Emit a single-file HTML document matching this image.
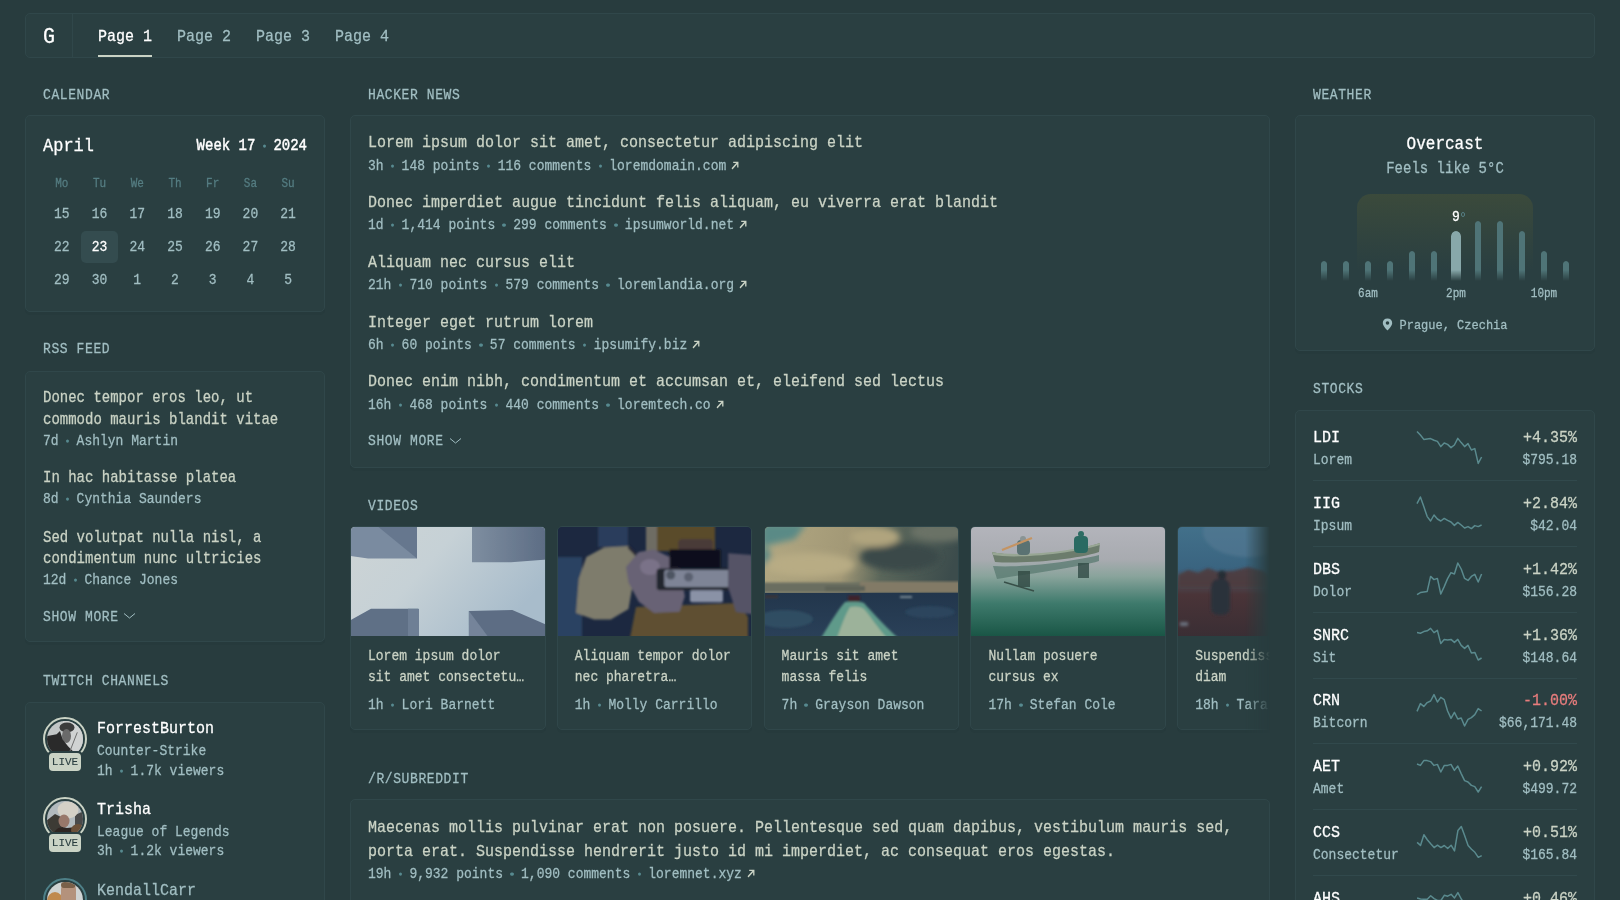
<!DOCTYPE html><html><head><meta charset="utf-8"><style>
:root{
  --bg:#283c3e; --wbg:#2a3f41; --bd:#30474a; --sep:#31494c;
  --base:#a1bec2; --hl:#ffffff; --sub:#557d82; --pri:#cad3c5; --neg:#e87d7d;
}
*{margin:0;padding:0;box-sizing:border-box}
html,body{width:1620px;height:900px;overflow:hidden;background:var(--bg);font-family:"Liberation Mono",monospace;color:var(--base);font-size:13px}
.a{position:absolute}
.t{position:absolute;white-space:pre;line-height:1;transform:scaleY(1.12);transform-origin:0 76.61%;-webkit-text-stroke:0.25px currentColor}
.box{position:absolute;background:var(--wbg);border:1px solid var(--bd);border-radius:5px;box-shadow:0 3px 0 0 #263a3c}
.dot{display:inline-block;width:18px;height:1px;position:relative}
.dot::after{content:"";position:absolute;left:7.25px;top:-4.5px;width:3.5px;height:3.5px;border-radius:50%;background:#578a8f}
.ls{letter-spacing:.6px}
</style></head><body><div id="root" style="position:absolute;left:0;top:0;width:1620px;height:900px;will-change:transform">
<div class="box" style="left:25px;top:13px;width:1570px;height:45px;box-shadow:none"></div>
<div class="a" style="left:72px;top:14px;width:1px;height:43px;background:var(--bd)"></div>
<div class="t" style="left:43px;top:27.88px;font-size:20px;color:var(--hl);">G</div>
<div class="t" style="left:98px;top:29.51px;font-size:15px;color:var(--hl);">Page 1</div>
<div class="t" style="left:177px;top:29.51px;font-size:15px;color:var(--base);">Page 2</div>
<div class="t" style="left:256px;top:29.51px;font-size:15px;color:var(--base);">Page 3</div>
<div class="t" style="left:335px;top:29.51px;font-size:15px;color:var(--base);">Page 4</div>
<div class="a" style="left:98px;top:55px;width:54px;height:2px;background:var(--pri)"></div>
<div class="t" style="left:43px;top:88.94px;font-size:13px;color:var(--base);letter-spacing:0.6px">CALENDAR</div>
<div class="box" style="left:25px;top:115px;width:300px;height:197px"></div>
<div class="t" style="left:43px;top:137.98px;font-size:17px;color:var(--hl);">April</div>
<div class="t" style="right:1313px;top:139.07px;font-size:14px;color:var(--hl);-webkit-text-stroke:0.4px #fff">Week 17<span class="dot"></span>2024</div>
<div class="t" style="left:43.86px;width:36px;text-align:center;top:178.77px;font-size:11px;color:var(--sub);">Mo</div>
<div class="t" style="left:81.57px;width:36px;text-align:center;top:178.77px;font-size:11px;color:var(--sub);">Tu</div>
<div class="t" style="left:119.28px;width:36px;text-align:center;top:178.77px;font-size:11px;color:var(--sub);">We</div>
<div class="t" style="left:156.99px;width:36px;text-align:center;top:178.77px;font-size:11px;color:var(--sub);">Th</div>
<div class="t" style="left:194.7px;width:36px;text-align:center;top:178.77px;font-size:11px;color:var(--sub);">Fr</div>
<div class="t" style="left:232.41000000000003px;width:36px;text-align:center;top:178.77px;font-size:11px;color:var(--sub);">Sa</div>
<div class="t" style="left:270.12px;width:36px;text-align:center;top:178.77px;font-size:11px;color:var(--sub);">Su</div>
<div class="a" style="left:81.4px;top:231.4px;width:36.3px;height:31.6px;border-radius:5px;background:#344c4f"></div>
<div class="t" style="left:43.86px;width:36px;text-align:center;top:208.14px;font-size:13px;color:var(--base);">15</div>
<div class="t" style="left:81.57px;width:36px;text-align:center;top:208.14px;font-size:13px;color:var(--base);">16</div>
<div class="t" style="left:119.28px;width:36px;text-align:center;top:208.14px;font-size:13px;color:var(--base);">17</div>
<div class="t" style="left:156.99px;width:36px;text-align:center;top:208.14px;font-size:13px;color:var(--base);">18</div>
<div class="t" style="left:194.7px;width:36px;text-align:center;top:208.14px;font-size:13px;color:var(--base);">19</div>
<div class="t" style="left:232.41000000000003px;width:36px;text-align:center;top:208.14px;font-size:13px;color:var(--base);">20</div>
<div class="t" style="left:270.12px;width:36px;text-align:center;top:208.14px;font-size:13px;color:var(--base);">21</div>
<div class="t" style="left:43.86px;width:36px;text-align:center;top:240.74px;font-size:13px;color:var(--base);">22</div>
<div class="t" style="left:81.57px;width:36px;text-align:center;top:240.74px;font-size:13px;color:var(--hl);">23</div>
<div class="t" style="left:119.28px;width:36px;text-align:center;top:240.74px;font-size:13px;color:var(--base);">24</div>
<div class="t" style="left:156.99px;width:36px;text-align:center;top:240.74px;font-size:13px;color:var(--base);">25</div>
<div class="t" style="left:194.7px;width:36px;text-align:center;top:240.74px;font-size:13px;color:var(--base);">26</div>
<div class="t" style="left:232.41000000000003px;width:36px;text-align:center;top:240.74px;font-size:13px;color:var(--base);">27</div>
<div class="t" style="left:270.12px;width:36px;text-align:center;top:240.74px;font-size:13px;color:var(--base);">28</div>
<div class="t" style="left:43.86px;width:36px;text-align:center;top:273.74px;font-size:13px;color:var(--base);">29</div>
<div class="t" style="left:81.57px;width:36px;text-align:center;top:273.74px;font-size:13px;color:var(--base);">30</div>
<div class="t" style="left:119.28px;width:36px;text-align:center;top:273.74px;font-size:13px;color:var(--base);">1</div>
<div class="t" style="left:156.99px;width:36px;text-align:center;top:273.74px;font-size:13px;color:var(--base);">2</div>
<div class="t" style="left:194.7px;width:36px;text-align:center;top:273.74px;font-size:13px;color:var(--base);">3</div>
<div class="t" style="left:232.41000000000003px;width:36px;text-align:center;top:273.74px;font-size:13px;color:var(--base);">4</div>
<div class="t" style="left:270.12px;width:36px;text-align:center;top:273.74px;font-size:13px;color:var(--base);">5</div>
<div class="t" style="left:43px;top:342.94px;font-size:13px;color:var(--base);letter-spacing:0.6px">RSS FEED</div>
<div class="box" style="left:25px;top:370.5px;width:300px;height:271.5px"></div>
<div class="t" style="left:43px;top:391.17px;font-size:14px;color:var(--pri);">Donec tempor eros leo, ut</div>
<div class="t" style="left:43px;top:412.87px;font-size:14px;color:var(--pri);">commodo mauris blandit vitae</div>
<div class="t" style="left:43px;top:434.94px;font-size:13px;color:var(--base);">7d<span class="dot"></span>Ashlyn Martin</div>
<div class="t" style="left:43px;top:471.07px;font-size:14px;color:var(--pri);">In hac habitasse platea</div>
<div class="t" style="left:43px;top:493.04px;font-size:13px;color:var(--base);">8d<span class="dot"></span>Cynthia Saunders</div>
<div class="t" style="left:43px;top:530.57px;font-size:14px;color:var(--pri);">Sed volutpat nulla nisl, a</div>
<div class="t" style="left:43px;top:552.47px;font-size:14px;color:var(--pri);">condimentum nunc ultricies</div>
<div class="t" style="left:43px;top:574.34px;font-size:13px;color:var(--base);">12d<span class="dot"></span>Chance Jones</div>
<div class="t" style="left:43px;top:611.44px;font-size:13px;color:var(--base);letter-spacing:0.6px">SHOW MORE</div>
<svg class="a" style="left:123px;top:612px" width="13" height="8" viewBox="0 0 13 8"><path d="M1 1.5 L6.5 6 L12 1.5" fill="none" stroke="var(--base)" stroke-width="1"/></svg>
<div class="t" style="left:43px;top:674.94px;font-size:13px;color:var(--base);letter-spacing:0.6px">TWITCH CHANNELS</div>
<div class="box" style="left:25px;top:701.7px;width:300px;height:260px"></div>
<div class="a" style="left:43px;top:716.8px;width:44px;height:44px;border-radius:50%;border:2px solid var(--pri)"></div>
<svg class="a" style="left:47px;top:720.8px;border-radius:50%" width="36" height="36" viewBox="0 0 36 36"><defs><filter id="ab1"><feGaussianBlur stdDeviation="0.5"/></filter></defs><rect width="36" height="36" fill="#c2c6c6"/><rect x="16" width="20" height="36" fill="#d0d2d2"/><g filter="url(#ab1)"><ellipse cx="20" cy="6.5" rx="7.5" ry="5" fill="#3a3a3a"/><ellipse cx="19.5" cy="15" rx="4.5" ry="7" fill="#6a6a6a"/><polygon points="-1,15.3 9.7,13.3 13,10 15.7,18.6 21,25.3 26,30.3 26,37 -1,37" fill="#2a2a2a"/><line x1="30.3" y1="11.3" x2="23" y2="30" stroke="#6e6e6e" stroke-width="1"/></g></svg>
<div class="a" style="left:47px;top:751.0px;width:36px;height:22px;border-radius:5px;background:var(--wbg)"></div>
<div class="a" style="left:49px;top:753.0px;width:32px;height:18px;border-radius:4px;background:var(--pri)"></div>
<div class="t" style="left:45.0px;width:40px;text-align:center;top:757.27px;font-size:11px;color:#283c3e;-webkit-text-stroke:0.1px #283c3e;transform:scaleY(1.05)">LIVE</div>
<div class="t" style="left:97px;top:722.31px;font-size:15px;color:var(--hl);">ForrestBurton</div>
<div class="t" style="left:97px;top:745.44px;font-size:13px;color:var(--base);">Counter-Strike</div>
<div class="t" style="left:97px;top:764.84px;font-size:13px;color:var(--base);">1h<span class="dot"></span>1.7k viewers</div>
<div class="a" style="left:43px;top:797.4px;width:44px;height:44px;border-radius:50%;border:2px solid var(--pri)"></div>
<svg class="a" style="left:47px;top:801.4px;border-radius:50%" width="36" height="36" viewBox="0 0 36 36"><defs><filter id="ab2"><feGaussianBlur stdDeviation="0.6"/></filter></defs><rect width="36" height="36" fill="#b2babe"/><g filter="url(#ab2)"><polygon points="-1,20 8,13 16,17 16,37 -1,37" fill="#3e3a36"/><polygon points="28,14 37,10 37,30 28,30" fill="#4a4a48"/><ellipse cx="21" cy="9" rx="10.5" ry="8.5" fill="#d4d0c6"/><ellipse cx="17" cy="20" rx="5.5" ry="6.5" fill="#98786a"/><path d="M5 37 C7 27 14 25 20 27 C28 25 34 28 37 37 Z" fill="#2e2620"/><ellipse cx="31" cy="29" rx="7" ry="6" fill="#6a5038"/></g></svg>
<div class="a" style="left:47px;top:831.6px;width:36px;height:22px;border-radius:5px;background:var(--wbg)"></div>
<div class="a" style="left:49px;top:833.6px;width:32px;height:18px;border-radius:4px;background:var(--pri)"></div>
<div class="t" style="left:45.0px;width:40px;text-align:center;top:837.87px;font-size:11px;color:#283c3e;-webkit-text-stroke:0.1px #283c3e;transform:scaleY(1.05)">LIVE</div>
<div class="t" style="left:97px;top:802.91px;font-size:15px;color:var(--hl);">Trisha</div>
<div class="t" style="left:97px;top:826.04px;font-size:13px;color:var(--base);">League of Legends</div>
<div class="t" style="left:97px;top:845.44px;font-size:13px;color:var(--base);">3h<span class="dot"></span>1.2k viewers</div>
<div class="a" style="left:43px;top:878.0px;width:44px;height:44px;border-radius:50%;border:2px solid #4e8088"></div>
<svg class="a" style="left:47px;top:882.0px;border-radius:50%" width="36" height="36" viewBox="0 0 36 36"><defs><filter id="ab3"><feGaussianBlur stdDeviation="0.6"/></filter></defs><rect width="36" height="36" fill="#d0d4d4"/><g filter="url(#ab3)"><ellipse cx="8" cy="19" rx="8" ry="9" fill="#c08a50"/><rect x="14" y="1" width="15" height="24" rx="6" fill="#b4927c"/><rect x="14" y="0" width="14.5" height="6" rx="3" fill="#7a6048"/></g></svg>
<div class="t" style="left:97px;top:883.51px;font-size:15px;color:var(--base);">KendallCarr</div>
<div class="t" style="left:97px;top:906.64px;font-size:13px;color:var(--base);">Just Chatting</div>
<div class="t" style="left:97px;top:926.04px;font-size:13px;color:var(--base);">2h<span class="dot"></span>900 viewers</div>
<div class="t" style="left:368px;top:88.94px;font-size:13px;color:var(--base);letter-spacing:0.6px">HACKER NEWS</div>
<div class="box" style="left:350px;top:115px;width:920px;height:353px"></div>
<div class="t" style="left:368px;top:136.31px;font-size:15px;color:var(--pri);">Lorem ipsum dolor sit amet, consectetur adipiscing elit</div>
<div class="t" style="left:368px;top:159.54px;font-size:13px;color:var(--base);">3h<span class="dot"></span>148 points<span class="dot"></span>116 comments<span class="dot"></span>loremdomain.com<svg style="display:inline-block;vertical-align:baseline;margin-left:5px;position:relative;top:0px" width="8" height="8" viewBox="0 0 8 8"><path d="M1 7 L6.8 1.2 M2.2 1.2 H6.8 V5.8" fill="none" stroke="var(--pri)" stroke-width="1.3"/></svg></div>
<div class="t" style="left:368px;top:196.11px;font-size:15px;color:var(--pri);">Donec imperdiet augue tincidunt felis aliquam, eu viverra erat blandit</div>
<div class="t" style="left:368px;top:219.34px;font-size:13px;color:var(--base);">1d<span class="dot"></span>1,414 points<span class="dot"></span>299 comments<span class="dot"></span>ipsumworld.net<svg style="display:inline-block;vertical-align:baseline;margin-left:5px;position:relative;top:0px" width="8" height="8" viewBox="0 0 8 8"><path d="M1 7 L6.8 1.2 M2.2 1.2 H6.8 V5.8" fill="none" stroke="var(--pri)" stroke-width="1.3"/></svg></div>
<div class="t" style="left:368px;top:255.91px;font-size:15px;color:var(--pri);">Aliquam nec cursus elit</div>
<div class="t" style="left:368px;top:279.14px;font-size:13px;color:var(--base);">21h<span class="dot"></span>710 points<span class="dot"></span>579 comments<span class="dot"></span>loremlandia.org<svg style="display:inline-block;vertical-align:baseline;margin-left:5px;position:relative;top:0px" width="8" height="8" viewBox="0 0 8 8"><path d="M1 7 L6.8 1.2 M2.2 1.2 H6.8 V5.8" fill="none" stroke="var(--pri)" stroke-width="1.3"/></svg></div>
<div class="t" style="left:368px;top:315.51px;font-size:15px;color:var(--pri);">Integer eget rutrum lorem</div>
<div class="t" style="left:368px;top:338.94px;font-size:13px;color:var(--base);">6h<span class="dot"></span>60 points<span class="dot"></span>57 comments<span class="dot"></span>ipsumify.biz<svg style="display:inline-block;vertical-align:baseline;margin-left:5px;position:relative;top:0px" width="8" height="8" viewBox="0 0 8 8"><path d="M1 7 L6.8 1.2 M2.2 1.2 H6.8 V5.8" fill="none" stroke="var(--pri)" stroke-width="1.3"/></svg></div>
<div class="t" style="left:368px;top:375.41px;font-size:15px;color:var(--pri);">Donec enim nibh, condimentum et accumsan et, eleifend sed lectus</div>
<div class="t" style="left:368px;top:398.74px;font-size:13px;color:var(--base);">16h<span class="dot"></span>468 points<span class="dot"></span>440 comments<span class="dot"></span>loremtech.co<svg style="display:inline-block;vertical-align:baseline;margin-left:5px;position:relative;top:0px" width="8" height="8" viewBox="0 0 8 8"><path d="M1 7 L6.8 1.2 M2.2 1.2 H6.8 V5.8" fill="none" stroke="var(--pri)" stroke-width="1.3"/></svg></div>
<div class="t" style="left:368px;top:435.24px;font-size:13px;color:var(--base);letter-spacing:0.6px">SHOW MORE</div>
<svg class="a" style="left:449px;top:437px" width="13" height="8" viewBox="0 0 13 8"><path d="M1 1.5 L6.5 6 L12 1.5" fill="none" stroke="var(--base)" stroke-width="1"/></svg>
<div class="t" style="left:368px;top:500.34px;font-size:13px;color:var(--base);letter-spacing:0.6px">VIDEOS</div>
<div class="a" style="left:350px;top:520px;width:920px;height:216px;overflow:hidden;-webkit-mask-image:linear-gradient(to right,#000 0,#000 895px,transparent 920px)">
<div class="box" style="left:0.0px;top:6.2px;width:195.6px;height:204.2px;overflow:hidden"><svg class="a" style="left:0;top:0" width="194" height="109" viewBox="0 0 194 109" preserveAspectRatio="none"><defs><filter id="b0" x="-10%" y="-10%" width="120%" height="120%"><feGaussianBlur stdDeviation="0.6"/></filter><linearGradient id="t0s" x1="0" y1="0" x2="1" y2="0.5"><stop offset="0" stop-color="#cdd4d5"/><stop offset="0.45" stop-color="#c6d1d6"/><stop offset="1" stop-color="#a8bccb"/></linearGradient>
<linearGradient id="t0a" x1="0" y1="0" x2="1" y2="0"><stop offset="0" stop-color="#7e8ea0"/><stop offset="1" stop-color="#5c6c84"/></linearGradient></defs>
<rect width="194" height="109" fill="url(#t0s)"/>
<g filter="url(#b0)">
<polygon points="-2,-2 66,-2 66,31.6 17,31.6 -2,28.8" fill="#7a8ba0"/>
<polygon points="25,-2 66,-2 66,31.6" fill="#66778e"/>
<polygon points="121,-2 196,-2 196,32.6 160,35.2 121,35.2" fill="url(#t0a)"/>
<polygon points="-2,94 20,81.8 67,81.8 67,111 -2,111" fill="#5e6f86"/>
<polygon points="57,81.8 68,81.8 68,111 57,111" fill="#6e7f95"/>
<polygon points="117.9,84 161.3,83 196,98 196,111 117.9,111" fill="#5d6d84"/>
<polygon points="117.9,84 138,111 117.9,111" fill="#74849a"/>
</g></svg></div>
<div class="t" style="left:18.0px;top:130.04px;font-size:13px;color:var(--pri);">Lorem ipsum dolor</div>
<div class="t" style="left:18.0px;top:150.84px;font-size:13px;color:var(--pri);">sit amet consectetu…</div>
<div class="t" style="left:18.0px;top:178.54px;font-size:13px;color:var(--base);">1h<span class="dot"></span>Lori Barnett</div>
<div class="box" style="left:206.8px;top:6.2px;width:195.6px;height:204.2px;overflow:hidden"><svg class="a" style="left:0;top:0" width="194" height="109" viewBox="0 0 194 109" preserveAspectRatio="none"><defs><filter id="b1" x="-10%" y="-10%" width="120%" height="120%"><feGaussianBlur stdDeviation="1.3"/></filter></defs>
<rect width="194" height="109" fill="#1c2840"/>
<g filter="url(#b1)">
<rect x="-2" y="30" width="26" height="81" fill="#2a4262"/>
<rect x="40" y="-2" width="30" height="22" fill="#2a3e5c"/>
<rect x="99" y="-2" width="58" height="26" fill="#5a4c2c"/>
<rect x="88" y="-2" width="11" height="32" fill="#6e6c64"/>
<polygon points="78,80 180,76 190,90 190,111 72,111" fill="#5e5030"/>
<polygon points="18,86 20.7,52 28.4,30 46,20.4 70.5,19 78,30 74.4,59.4 70.5,82 52.7,92.6 36,92.6" fill="#7e7c6c"/>
<line x1="70.5" y1="19.8" x2="103.8" y2="54.3" stroke="#2a2c38" stroke-width="3"/>
<polygon points="68,40 80.8,25 96,22.4 114,31.3 121.7,40 126.8,69.5 121.7,84.8 96,86 80.8,74.8 70.5,55.6" fill="#686274"/>
<ellipse cx="92" cy="40" rx="10" ry="8" fill="#7a7288"/>
<rect x="120.4" y="12" width="34.6" height="12" rx="4" fill="#4a3a38"/>
<rect x="111.5" y="22.4" width="51" height="19" fill="#0e111c"/>
<rect x="98.7" y="41.5" width="89.3" height="21.8" rx="3" fill="#22252f"/>
<rect x="106.3" y="43" width="79.3" height="17" rx="2" fill="#7e8496"/>
<circle cx="112.7" cy="48" r="4.5" fill="#4e5462"/>
<circle cx="130.6" cy="50" r="4.5" fill="#5a6070"/>
<rect x="132" y="63.3" width="33" height="12" rx="2" fill="#8a92a6"/>
<polygon points="170.2,26.2 194,28 196,87.5 178,85 170,60" fill="#555266"/>
</g></svg></div>
<div class="t" style="left:224.8px;top:130.04px;font-size:13px;color:var(--pri);">Aliquam tempor dolor</div>
<div class="t" style="left:224.8px;top:150.84px;font-size:13px;color:var(--pri);">nec pharetra…</div>
<div class="t" style="left:224.8px;top:178.54px;font-size:13px;color:var(--base);">1h<span class="dot"></span>Molly Carrillo</div>
<div class="box" style="left:413.6px;top:6.2px;width:195.6px;height:204.2px;overflow:hidden"><svg class="a" style="left:0;top:0" width="194" height="109" viewBox="0 0 194 109" preserveAspectRatio="none"><defs><filter id="b2a" x="-10%" y="-10%" width="120%" height="120%"><feGaussianBlur stdDeviation="3"/></filter><filter id="b2" x="-10%" y="-10%" width="120%" height="120%"><feGaussianBlur stdDeviation="1"/></filter><linearGradient id="t2s" x1="0" y1="0" x2="1" y2="0.15"><stop offset="0" stop-color="#b2a882"/><stop offset="0.45" stop-color="#a29876"/><stop offset="0.65" stop-color="#5a665a"/><stop offset="1" stop-color="#3c4c4c"/></linearGradient>
<linearGradient id="t2w" x1="0" y1="0" x2="0" y2="1"><stop offset="0" stop-color="#22364c"/><stop offset="1" stop-color="#2a4058"/></linearGradient></defs>
<rect width="194" height="109" fill="url(#t2s)"/>
<g filter="url(#b2a)">
<polygon points="-4,-4 42,-4 30,12 -4,20" fill="#5a8a86"/>
<ellipse cx="0" cy="30" rx="6" ry="10" fill="#5e8a84"/>
<ellipse cx="135" cy="30" rx="40" ry="14" fill="#3a4a4a"/>
<ellipse cx="175" cy="5" rx="30" ry="10" fill="#6a7266"/>
<ellipse cx="45" cy="38" rx="45" ry="12" fill="#b8ac84"/>
<ellipse cx="110" cy="10" rx="25" ry="10" fill="#b0a47e"/>
</g>
<g filter="url(#b2)">
<rect x="-2" y="55.5" width="100" height="10" fill="#6a6e60"/>
<rect x="95" y="54.5" width="101" height="11.5" fill="#827a66"/>
<rect x="60" y="59" width="40" height="5" fill="#5e6458"/>
</g>
<rect x="0" y="65.8" width="194" height="43.2" fill="url(#t2w)"/>
<g filter="url(#b2)">
<ellipse cx="20" cy="92" rx="28" ry="9" fill="#35546a" opacity="0.7"/>
<ellipse cx="165" cy="85" rx="25" ry="6" fill="#2e4a62" opacity="0.7"/>
<path d="M80 75 C86 74 94 74 99 76 C106 84 116 95 133 111 L56 111 C64 98 72 84 80 75 Z" fill="#5e9a8a"/>
<path d="M85 80 C90 79 95 79 99 82 C106 90 112 100 122 111 L72 111 C76 100 80 88 85 80 Z" fill="#9cb29a"/>
<rect x="83" y="68.5" width="12" height="6" rx="1" fill="#40242a"/>
<rect x="0" y="68.5" width="13" height="2.5" fill="#3c3434"/>
<rect x="135" y="69" width="12" height="2" fill="#9aaab0" opacity="0.7"/>
</g></svg></div>
<div class="t" style="left:431.6px;top:130.04px;font-size:13px;color:var(--pri);">Mauris sit amet</div>
<div class="t" style="left:431.6px;top:150.84px;font-size:13px;color:var(--pri);">massa felis</div>
<div class="t" style="left:431.6px;top:178.54px;font-size:13px;color:var(--base);">7h<span class="dot"></span>Grayson Dawson</div>
<div class="box" style="left:620.4px;top:6.2px;width:195.6px;height:204.2px;overflow:hidden"><svg class="a" style="left:0;top:0" width="194" height="109" viewBox="0 0 194 109" preserveAspectRatio="none"><defs><filter id="b3" x="-10%" y="-10%" width="120%" height="120%"><feGaussianBlur stdDeviation="0.7"/></filter><linearGradient id="t3g" x1="0" y1="0" x2="0" y2="1"><stop offset="0" stop-color="#b3b4bb"/><stop offset="0.3" stop-color="#a8abb0"/><stop offset="0.45" stop-color="#8aa49c"/><stop offset="0.7" stop-color="#3e7a6c"/><stop offset="1" stop-color="#1a5646"/></linearGradient></defs>
<rect width="194" height="109" fill="url(#t3g)"/>
<g filter="url(#b3)">
<path d="M21 25 C45 31 100 26 129 16 L128 25 C105 33 50 37 24 35 Z" fill="#6c7c6c"/>
<path d="M21 25 C45 30 100 25 129 16 L129 18 C100 27 45 32 22 28 Z" fill="#98a694"/>
<path d="M22 39 C50 41 100 35 128 28 L128 34 C110 40 50 48 26 52 Z" fill="#587a70" opacity="0.75"/>
<rect x="46" y="13" width="13" height="15" rx="4" fill="#5a7272"/>
<circle cx="52" cy="12" r="3" fill="#8a9494"/>
<rect x="103" y="9" width="14" height="17" rx="4" fill="#2c6a62"/>
<circle cx="110" cy="7" r="3" fill="#2e6c64"/>
<line x1="31" y1="23" x2="61" y2="11" stroke="#c49464" stroke-width="2.2"/>
<rect x="47" y="44" width="12" height="16" fill="#2e4842" opacity="0.8"/>
<line x1="33" y1="55" x2="63" y2="64" stroke="#385048" stroke-width="1.5"/>
<rect x="107" y="36" width="11" height="15" fill="#2e4a44" opacity="0.8"/>
</g></svg></div>
<div class="t" style="left:638.4000000000001px;top:130.04px;font-size:13px;color:var(--pri);">Nullam posuere</div>
<div class="t" style="left:638.4000000000001px;top:150.84px;font-size:13px;color:var(--pri);">cursus ex</div>
<div class="t" style="left:638.4000000000001px;top:178.54px;font-size:13px;color:var(--base);">17h<span class="dot"></span>Stefan Cole</div>
<div class="box" style="left:827.2px;top:6.2px;width:195.6px;height:204.2px;overflow:hidden"><svg class="a" style="left:0;top:0" width="194" height="109" viewBox="0 0 194 109" preserveAspectRatio="none"><defs><filter id="b4" x="-10%" y="-10%" width="120%" height="120%"><feGaussianBlur stdDeviation="1.5"/></filter><linearGradient id="t4g" x1="0" y1="0" x2="0" y2="1"><stop offset="0" stop-color="#42708a"/><stop offset="0.38" stop-color="#3a6480"/><stop offset="0.5" stop-color="#4a4c56"/><stop offset="0.62" stop-color="#4a3438"/><stop offset="1" stop-color="#3a2e34"/></linearGradient></defs>
<rect width="194" height="109" fill="url(#t4g)"/>
<g filter="url(#b4)">
<ellipse cx="70" cy="5" rx="45" ry="25" fill="#5a7e96" opacity="0.5"/>
<polygon points="0,48 10,43 20,46 30,41 40,45 55,44 70,40 85,44 90,48 90,60 0,60" fill="#4c3a3e" opacity="0.9"/>
<rect x="33" y="52" width="19" height="36" rx="7" fill="#2c303a"/>
<circle cx="44" cy="48" r="4.5" fill="#282e36"/>
<rect x="2" y="95" width="8" height="4" fill="#7a8a9a" opacity="0.7"/>
</g></svg></div>
<div class="t" style="left:845.2px;top:130.04px;font-size:13px;color:var(--pri);">Suspendisse potenti</div>
<div class="t" style="left:845.2px;top:150.84px;font-size:13px;color:var(--pri);">diam</div>
<div class="t" style="left:845.2px;top:178.54px;font-size:13px;color:var(--base);">18h<span class="dot"></span>Tara Lopez</div>
</div>
<div class="t" style="left:368px;top:773.24px;font-size:13px;color:var(--base);letter-spacing:0.6px">/R/SUBREDDIT</div>
<div class="box" style="left:350px;top:799.3px;width:920px;height:200px"></div>
<div class="t" style="left:368px;top:820.81px;font-size:15px;color:var(--pri);">Maecenas mollis pulvinar erat non posuere. Pellentesque sed quam dapibus, vestibulum mauris sed,</div>
<div class="t" style="left:368px;top:844.51px;font-size:15px;color:var(--pri);">porta erat. Suspendisse hendrerit justo id mi imperdiet, ac consequat eros egestas.</div>
<div class="t" style="left:368px;top:867.64px;font-size:13px;color:var(--base);">19h<span class="dot"></span>9,932 points<span class="dot"></span>1,090 comments<span class="dot"></span>loremnet.xyz<svg style="display:inline-block;vertical-align:baseline;margin-left:5px;position:relative;top:0px" width="8" height="8" viewBox="0 0 8 8"><path d="M1 7 L6.8 1.2 M2.2 1.2 H6.8 V5.8" fill="none" stroke="var(--pri)" stroke-width="1.3"/></svg></div>
<div class="t" style="left:1313px;top:88.94px;font-size:13px;color:var(--base);letter-spacing:0.6px">WEATHER</div>
<div class="box" style="left:1295px;top:115px;width:300px;height:236.3px"></div>
<div class="t" style="left:1345.0px;width:200px;text-align:center;top:136.64px;font-size:16px;color:var(--hl);">Overcast</div>
<div class="t" style="left:1345.0px;width:200px;text-align:center;top:162.17px;font-size:14px;color:var(--base);">Feels like 5°C</div>
<div class="a" style="left:1357px;top:193.7px;width:176px;height:90px;border-radius:14px 14px 0 0;background:linear-gradient(to bottom,rgba(86,92,50,0.38),rgba(86,92,50,0.12) 55%,rgba(86,92,50,0) 85%)"></div>
<div class="a" style="left:1321.0px;top:260.8px;width:6px;height:20.19999999999999px;border-radius:3.0px 3.0px 0 0;background:#4f7477;-webkit-mask-image:linear-gradient(to bottom,#000 calc(100% - 11px),transparent)"></div>
<div class="a" style="left:1343.0px;top:260.8px;width:6px;height:20.19999999999999px;border-radius:3.0px 3.0px 0 0;background:#4f7477;-webkit-mask-image:linear-gradient(to bottom,#000 calc(100% - 11px),transparent)"></div>
<div class="a" style="left:1365.0px;top:260.8px;width:6px;height:20.19999999999999px;border-radius:3.0px 3.0px 0 0;background:#4f7477;-webkit-mask-image:linear-gradient(to bottom,#000 calc(100% - 11px),transparent)"></div>
<div class="a" style="left:1387.0px;top:260.8px;width:6px;height:20.19999999999999px;border-radius:3.0px 3.0px 0 0;background:#4f7477;-webkit-mask-image:linear-gradient(to bottom,#000 calc(100% - 11px),transparent)"></div>
<div class="a" style="left:1409.0px;top:250.8px;width:6px;height:30.19999999999999px;border-radius:3.0px 3.0px 0 0;background:#4f7477;-webkit-mask-image:linear-gradient(to bottom,#000 calc(100% - 11px),transparent)"></div>
<div class="a" style="left:1431.0px;top:250.8px;width:6px;height:30.19999999999999px;border-radius:3.0px 3.0px 0 0;background:#4f7477;-webkit-mask-image:linear-gradient(to bottom,#000 calc(100% - 11px),transparent)"></div>
<div class="a" style="left:1451.0px;top:230.8px;width:10px;height:50.19999999999999px;border-radius:5.0px 5.0px 0 0;background:#88a8aa;-webkit-mask-image:linear-gradient(to bottom,#000 calc(100% - 11px),transparent)"></div>
<div class="a" style="left:1475.0px;top:220.8px;width:6px;height:60.19999999999999px;border-radius:3.0px 3.0px 0 0;background:#4f7477;-webkit-mask-image:linear-gradient(to bottom,#000 calc(100% - 11px),transparent)"></div>
<div class="a" style="left:1497.0px;top:220.8px;width:6px;height:60.19999999999999px;border-radius:3.0px 3.0px 0 0;background:#4f7477;-webkit-mask-image:linear-gradient(to bottom,#000 calc(100% - 11px),transparent)"></div>
<div class="a" style="left:1519.0px;top:230.8px;width:6px;height:50.19999999999999px;border-radius:3.0px 3.0px 0 0;background:#4f7477;-webkit-mask-image:linear-gradient(to bottom,#000 calc(100% - 11px),transparent)"></div>
<div class="a" style="left:1541.0px;top:250.8px;width:6px;height:30.19999999999999px;border-radius:3.0px 3.0px 0 0;background:#4f7477;-webkit-mask-image:linear-gradient(to bottom,#000 calc(100% - 11px),transparent)"></div>
<div class="a" style="left:1563.0px;top:260.8px;width:6px;height:20.19999999999999px;border-radius:3.0px 3.0px 0 0;background:#4f7477;-webkit-mask-image:linear-gradient(to bottom,#000 calc(100% - 11px),transparent)"></div>
<div class="t" style="left:1452px;top:211.44px;font-size:13px;color:var(--hl);">9</div>
<div class="a" style="left:1460.5px;top:212px;width:4.5px;height:4.5px;border-radius:50%;border:1px solid var(--sub)"></div>
<div class="t" style="left:1338.0px;width:60px;text-align:center;top:288.57px;font-size:11px;color:var(--base);">6am</div>
<div class="t" style="left:1426.0px;width:60px;text-align:center;top:288.57px;font-size:11px;color:var(--base);">2pm</div>
<div class="t" style="left:1514.0px;width:60px;text-align:center;top:288.57px;font-size:11px;color:var(--base);">10pm</div>
<svg class="a" style="left:1382px;top:318px" width="11" height="13" viewBox="0 0 11 13"><path d="M5.5 0.5 C2.5 0.5 0.8 2.6 0.8 5 C0.8 8 5.5 12.5 5.5 12.5 C5.5 12.5 10.2 8 10.2 5 C10.2 2.6 8.5 0.5 5.5 0.5 Z M5.5 3.2 A1.8 1.8 0 1 1 5.5 6.8 A1.8 1.8 0 1 1 5.5 3.2 Z" fill="var(--base)" fill-rule="evenodd"/></svg>
<div class="t" style="left:1399.5px;top:320.31px;font-size:12px;color:var(--base);">Prague, Czechia</div>
<div class="t" style="left:1313px;top:382.64px;font-size:13px;color:var(--base);letter-spacing:0.6px">STOCKS</div>
<div class="box" style="left:1295px;top:410px;width:300px;height:520px"></div>
<div class="t" style="left:1313px;top:431.11px;font-size:15px;color:var(--hl);">LDI</div>
<div class="t" style="left:1313px;top:454.14px;font-size:13px;color:var(--base);">Lorem</div>
<div class="t" style="right:43px;top:431.11px;font-size:15px;color:var(--pri);">+4.35%</div>
<div class="t" style="right:43px;top:454.14px;font-size:13px;color:var(--base);">$795.18</div>
<div class="a" style="left:1313px;top:480.1px;width:264px;height:1px;background:var(--sep)"></div>
<div class="t" style="left:1313px;top:496.91px;font-size:15px;color:var(--hl);">IIG</div>
<div class="t" style="left:1313px;top:519.94px;font-size:13px;color:var(--base);">Ipsum</div>
<div class="t" style="right:43px;top:496.91px;font-size:15px;color:var(--pri);">+2.84%</div>
<div class="t" style="right:43px;top:519.94px;font-size:13px;color:var(--base);">$42.04</div>
<div class="a" style="left:1313px;top:545.9px;width:264px;height:1px;background:var(--sep)"></div>
<div class="t" style="left:1313px;top:562.71px;font-size:15px;color:var(--hl);">DBS</div>
<div class="t" style="left:1313px;top:585.74px;font-size:13px;color:var(--base);">Dolor</div>
<div class="t" style="right:43px;top:562.71px;font-size:15px;color:var(--pri);">+1.42%</div>
<div class="t" style="right:43px;top:585.74px;font-size:13px;color:var(--base);">$156.28</div>
<div class="a" style="left:1313px;top:611.7px;width:264px;height:1px;background:var(--sep)"></div>
<div class="t" style="left:1313px;top:628.51px;font-size:15px;color:var(--hl);">SNRC</div>
<div class="t" style="left:1313px;top:651.54px;font-size:13px;color:var(--base);">Sit</div>
<div class="t" style="right:43px;top:628.51px;font-size:15px;color:var(--pri);">+1.36%</div>
<div class="t" style="right:43px;top:651.54px;font-size:13px;color:var(--base);">$148.64</div>
<div class="a" style="left:1313px;top:677.5px;width:264px;height:1px;background:var(--sep)"></div>
<div class="t" style="left:1313px;top:694.31px;font-size:15px;color:var(--hl);">CRN</div>
<div class="t" style="left:1313px;top:717.34px;font-size:13px;color:var(--base);">Bitcorn</div>
<div class="t" style="right:43px;top:694.31px;font-size:15px;color:var(--neg);">-1.00%</div>
<div class="t" style="right:43px;top:717.34px;font-size:13px;color:var(--base);">$66,171.48</div>
<div class="a" style="left:1313px;top:743.3px;width:264px;height:1px;background:var(--sep)"></div>
<div class="t" style="left:1313px;top:760.11px;font-size:15px;color:var(--hl);">AET</div>
<div class="t" style="left:1313px;top:783.14px;font-size:13px;color:var(--base);">Amet</div>
<div class="t" style="right:43px;top:760.11px;font-size:15px;color:var(--pri);">+0.92%</div>
<div class="t" style="right:43px;top:783.14px;font-size:13px;color:var(--base);">$499.72</div>
<div class="a" style="left:1313px;top:809.1px;width:264px;height:1px;background:var(--sep)"></div>
<div class="t" style="left:1313px;top:825.91px;font-size:15px;color:var(--hl);">CCS</div>
<div class="t" style="left:1313px;top:848.94px;font-size:13px;color:var(--base);">Consectetur</div>
<div class="t" style="right:43px;top:825.91px;font-size:15px;color:var(--pri);">+0.51%</div>
<div class="t" style="right:43px;top:848.94px;font-size:13px;color:var(--base);">$165.84</div>
<div class="a" style="left:1313px;top:874.9px;width:264px;height:1px;background:var(--sep)"></div>
<div class="t" style="left:1313px;top:891.71px;font-size:15px;color:var(--hl);">AHS</div>
<div class="t" style="left:1313px;top:914.74px;font-size:13px;color:var(--base);">Adipiscing</div>
<div class="t" style="right:43px;top:891.71px;font-size:15px;color:var(--pri);">+0.46%</div>
<div class="t" style="right:43px;top:914.74px;font-size:13px;color:var(--base);">$310.25</div>
<svg class="a" style="left:0;top:0;overflow:visible" width="1620" height="900"><path d="M1417.0 431.4 L1420.4 435.0 L1423.8 439.4 L1427.2 439.0 L1430.6 438.6 L1434.0 440.2 L1437.4 441.4 L1440.8 446.6 L1444.2 443.0 L1447.6 444.4 L1451.0 447.6 L1454.4 445.0 L1457.8 438.4 L1461.2 442.6 L1464.6 446.6 L1468.0 443.6 L1471.4 450.0 L1474.8 448.6 L1478.2 463.4 L1481.6 457.0" fill="none" stroke="#5a8a8e" stroke-width="1.5" stroke-linejoin="round"/><path d="M1417.0 503.6 L1420.4 497.0 L1423.8 506.6 L1427.2 516.6 L1430.6 521.0 L1434.0 515.0 L1437.4 519.0 L1440.8 521.0 L1444.2 518.4 L1447.6 520.4 L1451.0 522.0 L1454.4 525.4 L1457.8 522.4 L1461.2 525.0 L1464.6 528.0 L1468.0 526.6 L1471.4 528.6 L1474.8 525.6 L1478.2 526.6 L1481.6 525.0" fill="none" stroke="#5a8a8e" stroke-width="1.5" stroke-linejoin="round"/><path d="M1417.0 594.6 L1420.4 592.6 L1423.8 592.0 L1427.2 591.4 L1430.6 576.4 L1434.0 579.6 L1437.4 578.4 L1440.8 594.0 L1444.2 586.6 L1447.6 578.6 L1451.0 572.6 L1454.4 574.0 L1457.8 563.0 L1461.2 569.0 L1464.6 578.4 L1468.0 580.4 L1471.4 576.4 L1474.8 574.4 L1478.2 582.0 L1481.6 574.0" fill="none" stroke="#5a8a8e" stroke-width="1.5" stroke-linejoin="round"/><path d="M1417.0 632.6 L1420.4 633.2 L1423.8 631.6 L1427.2 630.8 L1430.6 628.4 L1434.0 632.6 L1437.4 630.4 L1440.8 643.6 L1444.2 639.6 L1447.6 640.0 L1451.0 639.4 L1454.4 642.4 L1457.8 639.4 L1461.2 645.4 L1464.6 648.4 L1468.0 645.4 L1471.4 653.0 L1474.8 652.4 L1478.2 660.0 L1481.6 658.0" fill="none" stroke="#5a8a8e" stroke-width="1.5" stroke-linejoin="round"/><path d="M1417.0 711.4 L1420.4 703.6 L1423.8 706.4 L1427.2 702.6 L1430.6 701.0 L1434.0 694.6 L1437.4 702.0 L1440.8 697.4 L1444.2 699.6 L1447.6 711.0 L1451.0 718.4 L1454.4 712.4 L1457.8 719.0 L1461.2 718.0 L1464.6 726.0 L1468.0 719.4 L1471.4 717.6 L1474.8 714.6 L1478.2 708.6 L1481.6 711.0" fill="none" stroke="#5a8a8e" stroke-width="1.5" stroke-linejoin="round"/><path d="M1417.0 764.0 L1420.4 765.4 L1423.8 760.6 L1427.2 760.6 L1430.6 761.6 L1434.0 765.4 L1437.4 764.4 L1440.8 772.0 L1444.2 765.6 L1447.6 765.4 L1451.0 764.4 L1454.4 770.4 L1457.8 766.0 L1461.2 773.6 L1464.6 780.6 L1468.0 782.0 L1471.4 785.4 L1474.8 786.6 L1478.2 792.0 L1481.6 786.6" fill="none" stroke="#5a8a8e" stroke-width="1.5" stroke-linejoin="round"/><path d="M1417.1 842.4 L1420.5 845.4 L1423.9 834.8 L1427.3 839.7 L1430.7 843.8 L1434.1 847.6 L1437.5 845.2 L1440.9 847.6 L1444.3 845.5 L1447.7 848.5 L1451.1 845.2 L1454.5 850.9 L1457.9 830.6 L1461.3 826.5 L1464.7 835.8 L1468.1 845.4 L1471.5 849.2 L1474.9 852.3 L1478.3 857.3 L1481.7 855.6" fill="none" stroke="#5a8a8e" stroke-width="1.5" stroke-linejoin="round"/><path d="M1417.1 898.1 L1420.5 899.0 L1423.9 899.3 L1427.3 899.3 L1430.7 895.7 L1434.1 898.6 L1437.5 900.5 L1440.9 900.5 L1444.3 895.3 L1447.7 896.2 L1451.1 894.3 L1454.5 897.9 L1457.9 892.6 L1461.3 899.0 L1464.7 904.7 L1468.1 905.7 L1471.5 907.5 L1474.9 908.5 L1478.3 909.4 L1481.7 908.5" fill="none" stroke="#5a8a8e" stroke-width="1.5" stroke-linejoin="round"/></svg>
</div></body></html>
